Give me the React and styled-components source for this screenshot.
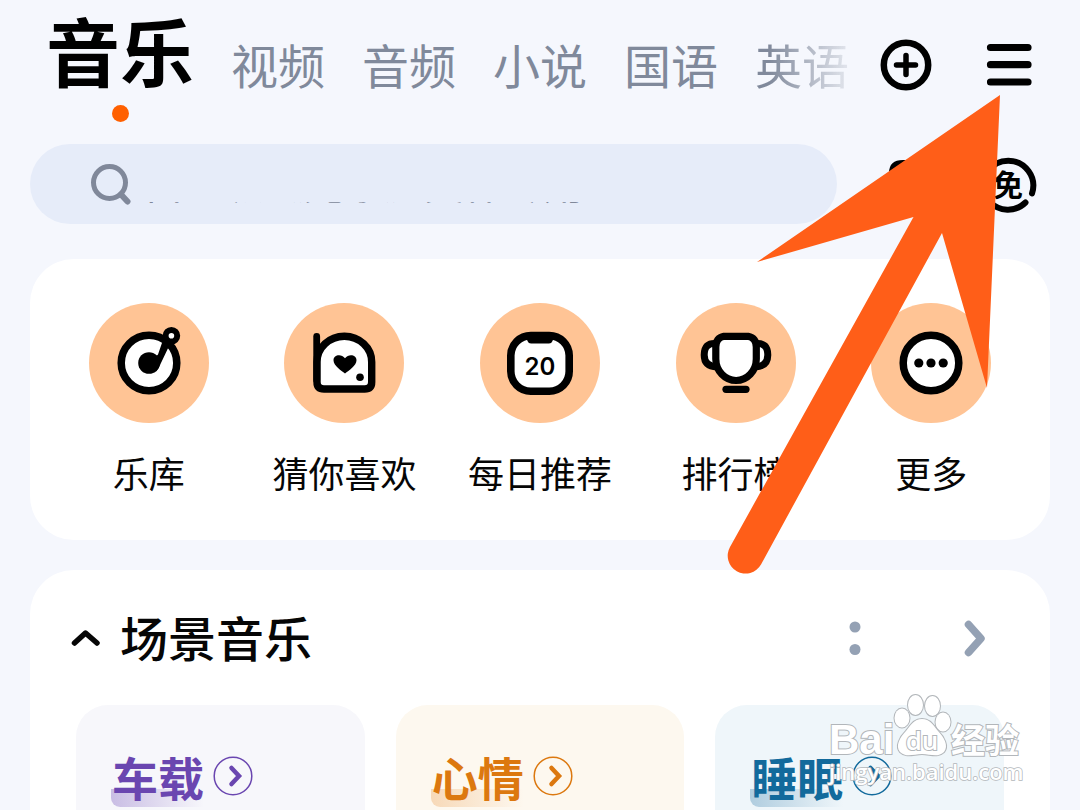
import React from 'react';
import styled, { createGlobalStyle, css } from 'styled-components';

const GlobalStyle = createGlobalStyle`
  *, *::before, *::after { box-sizing: border-box; }
  body {
    margin: 0;
    background: #f5f7fd;
    color: #060606;
    font-family: "Noto Sans CJK SC", "Noto Sans", sans-serif;
  }
  button {
    border: 0;
    padding: 0;
    background: none;
    color: inherit;
    font: inherit;
    cursor: pointer;
  }
  a { color: inherit; text-decoration: none; }
  svg { display: block; }
`;

const Page = styled.main`
  position: relative;
  display: flex;
  flex-direction: column;
  min-height: 100vh;
  padding: 0 30px;
`;

const Header = styled.header`
  display: flex;
  align-items: flex-start;
  height: 144px;
  padding: 0 18px 0 16px;
`;

const Tabs = styled.nav`
  display: flex;
  flex: 1;
  align-items: flex-start;
  gap: 37px;
  min-width: 0;
  height: 128px;
  white-space: nowrap;
`;

const Tab = styled.a`
  position: relative;
  flex: none;
  color: ${(p) => (p.$active ? '#000' : '#80899b')};
  font-size: ${(p) => (p.$active ? 74 : 47)}px;
  font-weight: ${(p) => (p.$active ? 700 : 400)};
  line-height: ${(p) => (p.$active ? 98 : 127)}px;

  ${(p) => p.$fading && css`
    background: linear-gradient(to right, #80899b 15%, rgba(128, 137, 155, 0.15));
    background-clip: text;
    color: transparent;
  `}

  &::after {
    content: ${(p) => (p.$active ? '""' : 'none')};
    position: absolute;
    left: calc(50% - 8px);
    bottom: -24px;
    width: 17px;
    height: 17px;
    border-radius: 50%;
    background: #ff6000;
  }
`;

const HeaderActions = styled.div`
  display: flex;
  align-items: center;
  gap: 54px;
  padding-top: 39px;
`;

const SearchRow = styled.div`
  display: flex;
  align-items: center;
  gap: 51px;
  padding-right: 13px;
`;

const SearchBox = styled.label`
  display: flex;
  flex: 1;
  align-items: center;
  gap: 12px;
  height: 80px;
  padding: 0 40px 0 60px;
  border-radius: 40px;
  background: #e6ecf9;
  color: #80889a;
`;

const SearchInput = styled.input`
  flex: 1;
  min-width: 0;
  height: 80px;
  padding: 0 0 4px;
  border: 0;
  outline: 0;
  background: transparent;
  color: inherit;
  font: 400 40px "Noto Sans CJK SC", sans-serif;
  clip-path: inset(58px 0 18px 0);

  &::placeholder { color: inherit; opacity: 1; }
`;

const SearchActions = styled.div`
  display: flex;
  gap: 33px;
`;

const Card = styled.section`
  border-radius: 44px;
  background: #fff;
`;

const Shortcuts = styled(Card)`
  display: grid;
  grid-template-columns: repeat(5, 1fr);
  margin-top: 35px;
  padding: 44px 21px;
`;

const Shortcut = styled.button`
  display: flex;
  flex-direction: column;
  align-items: center;
  gap: 25px;
  font-size: 36px;
  line-height: 48px;
  white-space: nowrap;
`;

const Disc = styled.span`
  width: 120px;
  height: 120px;
  border-radius: 50%;
  background: #ffc495;
`;

const Scenes = styled(Card)`
  display: flex;
  flex: 1;
  flex-direction: column;
  margin-top: 30px;
  padding: 32px 46px 0;
  border-radius: 44px 44px 0 0;
`;

const SceneHeader = styled.div`
  display: flex;
  align-items: center;
  height: 72px;
  padding: 0 17px 0 0;
  margin-left: -6px;
`;

const SceneTitle = styled.h2`
  flex: 1;
  margin: 0 0 0 18px;
  padding-bottom: 4px;
  font-size: 48px;
  font-weight: 500;
  line-height: 68px;
`;

const SceneActions = styled.div`
  display: flex;
  align-items: center;
  gap: 100px;
`;

const Tiles = styled.div`
  display: grid;
  flex: 1;
  grid-template-columns: repeat(3, 1fr);
  gap: 31px;
  margin-top: 31px;
`;

const Tile = styled.a`
  display: flex;
  align-items: flex-start;
  gap: 9px;
  padding: 44px 0 0 35px;
  border-radius: 32px 32px 0 0;
  background: ${(p) => p.$fill};
  color: ${(p) => p.$tone};
`;

const TileName = styled.span`
  padding: 0 0 4px 1px;
  border-radius: 9px 0 0 9px;
  background: linear-gradient(to right, ${(p) => p.$glow}, transparent) 0 100% / 100% 18px no-repeat;
  font-size: 46px;
  font-weight: 700;
  line-height: 54px;
`;

const RoundArrow = styled.svg`
  margin-top: 7px;
`;

const Pointer = styled.svg`
  position: absolute;
  top: 95px;
  right: 79px;
  overflow: visible;
  pointer-events: none;
`;

const Watermark = styled.svg`
  position: absolute;
  top: 690px;
  right: 50px;
  pointer-events: none;
`;

const shortcuts = [
  {
    name: '乐库',
    art: (
      <>
        <circle cx="60" cy="60" r="27.8" fill="#fff" strokeWidth="7.5" />
        <path d="M75 34 69 51.500 60 60 67 68.500Q70 66 71.500 61L81.500 40Z" fill="#000" stroke="none" />
        <circle cx="60" cy="60" r="10.8" fill="#000" stroke="none" />
        <circle cx="82.4" cy="32.8" r="5.8" fill="#fff" strokeWidth="6" />
      </>
    ),
  },
  {
    name: '猜你喜欢',
    art: (
      <>
        <path d="M33 59A27.3 25.7 0 0 1 87.7 59V79Q87.7 86 80.7 86H40Q33 86 33 79Z" fill="#fff" strokeWidth="7.4" />
        <path d="M32.7 33.500V77" strokeWidth="6.8" />
        <path d="M61 70.5C57.3 67.5 49.5 62.5 49.5 57.2 49.5 51.5 57.5 50.5 61 55.2 64.5 50.5 72.5 51.5 72.5 57.2 72.5 62.5 64.7 67.5 61 70.5Z" fill="#000" stroke="none" />
        <circle cx="76" cy="74.3" r="3.8" fill="#000" stroke="none" />
      </>
    ),
  },
  {
    name: '每日推荐',
    art: (
      <>
        <rect x="30.8" y="32.6" width="58.4" height="55.6" rx="20" fill="#fff" strokeWidth="7.6" />
        <path d="M46 34H74L72.5 38Q71.5 40.5 69 40.5H51Q48.500 40.5 47.500 38Z" fill="#000" stroke="none" />
        <text x="60" y="72" textAnchor="middle" fill="#000" stroke="none" fontFamily="Inter, sans-serif" fontSize="24" fontWeight="600">20</text>
      </>
    ),
  },
  {
    name: '排行榜',
    art: (
      <>
        <path d="M40 40.500Q28.200 39.500 28.200 52 28.200 63.500 41 64M80 40.500Q91.800 39.500 91.800 52 91.800 63.500 79 64" fill="#fff" strokeWidth="7" />
        <path d="M48 33.300H72Q80.300 35 80.300 44V56C80.300 68 71 77.500 60.100 77.500S39.800 68 39.800 56V44Q39.800 35 48 33.300Z" fill="#fff" strokeWidth="7.200" />
        <path d="M50 86.300H70" strokeWidth="7.200" />
      </>
    ),
  },
  {
    name: '更多',
    art: (
      <>
        <circle cx="60" cy="60" r="27.800" fill="#fff" strokeWidth="7.500" />
        <g fill="#000" stroke="none">
          <circle cx="47.800" cy="60" r="4.600" />
          <circle cx="60" cy="60" r="4.600" />
          <circle cx="72.200" cy="60" r="4.600" />
        </g>
      </>
    ),
  },
];

const scenes = [
  { name: '车载', tone: '#6a46b0', fill: '#f7f7fb', glow: '#c9bde4' },
  { name: '心情', tone: '#dc780f', fill: '#fdf8ef', glow: '#f7d9b8' },
  { name: '睡眠', tone: '#126a9c', fill: '#eff6fa', glow: '#b0cddf' },
];

export default function App() {
  return (
    <>
      <GlobalStyle />
      <Page>
        <Header>
          <Tabs>
            <Tab href="#music" $active>音乐</Tab>
            <Tab href="#video">视频</Tab>
            <Tab href="#audio">音频</Tab>
            <Tab href="#novel">小说</Tab>
            <Tab href="#mandarin">国语</Tab>
            <Tab href="#english" $fading>英语</Tab>
          </Tabs>
          <HeaderActions>
            <button aria-label="添加">
              <svg width="52" height="52" viewBox="0 0 52 52" fill="none" stroke="#000" strokeLinecap="round">
                <circle cx="26" cy="26" r="22.200" strokeWidth="6.500" />
                <path d="M26 16.500V35.500M16.500 26H35.500" strokeWidth="5.500" />
              </svg>
            </button>
            <button aria-label="菜单">
              <svg width="46" height="52" viewBox="0 0 46 52" stroke="#000" strokeWidth="7.200" strokeLinecap="round">
                <path d="M4.500 8.500H42M4.500 25.700H42M4.500 43H42" />
              </svg>
            </button>
          </HeaderActions>
        </Header>

        <SearchRow>
          <SearchBox>
            <svg width="42" height="42" viewBox="0 0 42 42" fill="none" stroke="currentColor" strokeWidth="5" strokeLinecap="round">
              <circle cx="19.500" cy="19.500" r="16" />
              <path d="M31 31.500 37.500 38.500" strokeWidth="6" />
            </svg>
            <SearchInput type="text" aria-label="搜索" placeholder="白七派《光象》交伴专用" />
          </SearchBox>
          <SearchActions>
            <button aria-label="听歌识曲">
              <svg width="58" height="58" viewBox="0 0 58 58" fill="none" stroke="#000" strokeWidth="6" strokeLinecap="round">
                <path d="M4 18Q4 8 15 8H40Q51 8 51 18V38Q51 49 40 49H15Q4 49 4 38Z" />
              </svg>
            </button>
            <button aria-label="免费">
              <svg width="58" height="58" viewBox="0 0 58 58" fill="none" stroke="#000" strokeWidth="6" strokeLinecap="round">
                <path d="M53 38.500A25 25 0 1 0 5.500 38.500M10.500 46.500A25 25 0 0 0 46.500 47.500" />
                <text x="29" y="41" textAnchor="middle" fill="#000" stroke="none" fontSize="30" fontWeight="700">免</text>
              </svg>
            </button>
          </SearchActions>
        </SearchRow>

        <Shortcuts>
          {shortcuts.map((s) => (
            <Shortcut key={s.name}>
              <Disc>
                <svg width="120" height="120" viewBox="0 0 120 120" fill="none" stroke="#000" strokeLinecap="round" strokeLinejoin="round">
                  {s.art}
                </svg>
              </Disc>
              {s.name}
            </Shortcut>
          ))}
        </Shortcuts>

        <Scenes>
          <SceneHeader>
            <button aria-label="收起">
              <svg width="32" height="24" viewBox="0 0 32 24" fill="none" stroke="#060606" strokeWidth="5.500" strokeLinecap="round" strokeLinejoin="round">
                <path d="M4.500 17 15.500 7 27 17" />
              </svg>
            </button>
            <SceneTitle>场景音乐</SceneTitle>
            <SceneActions>
              <button aria-label="更多选项">
                <svg width="12" height="36" viewBox="0 0 12 36" fill="#94a1b4">
                  <circle cx="6" cy="7" r="5.500" />
                  <circle cx="6" cy="29.500" r="5.500" />
                </svg>
              </button>
              <button aria-label="查看全部">
                <svg width="26" height="40" viewBox="0 0 26 40" fill="none" stroke="#94a1b4" strokeWidth="7.500" strokeLinecap="round" strokeLinejoin="round">
                  <path d="M7.500 6.500 20 20.500 7.500 34.500" />
                </svg>
              </button>
            </SceneActions>
          </SceneHeader>
          <Tiles>
            {scenes.map((s) => (
              <Tile key={s.name} href="#scene" $tone={s.tone} $fill={s.fill}>
                <TileName $glow={s.glow}>{s.name}</TileName>
                <RoundArrow width="40" height="40" viewBox="0 0 40 40" fill="none" stroke="currentColor" strokeLinecap="round">
                  <circle cx="20" cy="20" r="18.800" strokeWidth="1.500" />
                  <path d="M18.500 12 26 20 18.500 28" strokeWidth="4.500" />
                </RoundArrow>
              </Tile>
            ))}
          </Tiles>
        </Scenes>

        <Pointer width="273" height="480" viewBox="0 0 273 480" fill="#ff5e18" aria-hidden="true">
          <path d="M272 0 29 167 185.500 122 2 452A17.200 17.200 0 1 0 33 469.500L214 138 259 293Z" />
        </Pointer>

        <Watermark width="210" height="104" viewBox="820 690 210 104" fill="#fff" stroke="#b2b6ba" strokeWidth="2" paintOrder="stroke" aria-hidden="true">
          <text x="829" y="754" fontFamily="Liberation Sans, sans-serif" fontSize="42" fontWeight="700">Bai</text>
          <ellipse cx="902" cy="718" rx="7.500" ry="9.500" />
          <ellipse cx="915.500" cy="705" rx="7.500" ry="10" />
          <ellipse cx="932.500" cy="706" rx="7.500" ry="10" />
          <ellipse cx="943" cy="722" rx="7.500" ry="9.500" />
          <path d="M922 719C930 719 933 725 938 731 944 737 949 746 944 752 938 758 930 754 922 754S906 758 900 752C895 746 900 737 906 731 911 725 914 719 922 719Z" />
          <text x="922" y="750" textAnchor="middle" fontFamily="Open Sans, sans-serif" fontSize="26" fontWeight="600">du</text>
          <text x="951" y="753" fontFamily="Noto Sans CJK SC, sans-serif" fontSize="34" fontWeight="700">经验</text>
          <text x="829" y="780" fontFamily="Open Sans, sans-serif" fontSize="22" fontWeight="600" strokeWidth="1.500">jingyan.baidu.com</text>
        </Watermark>
      </Page>
    </>
  );
}
